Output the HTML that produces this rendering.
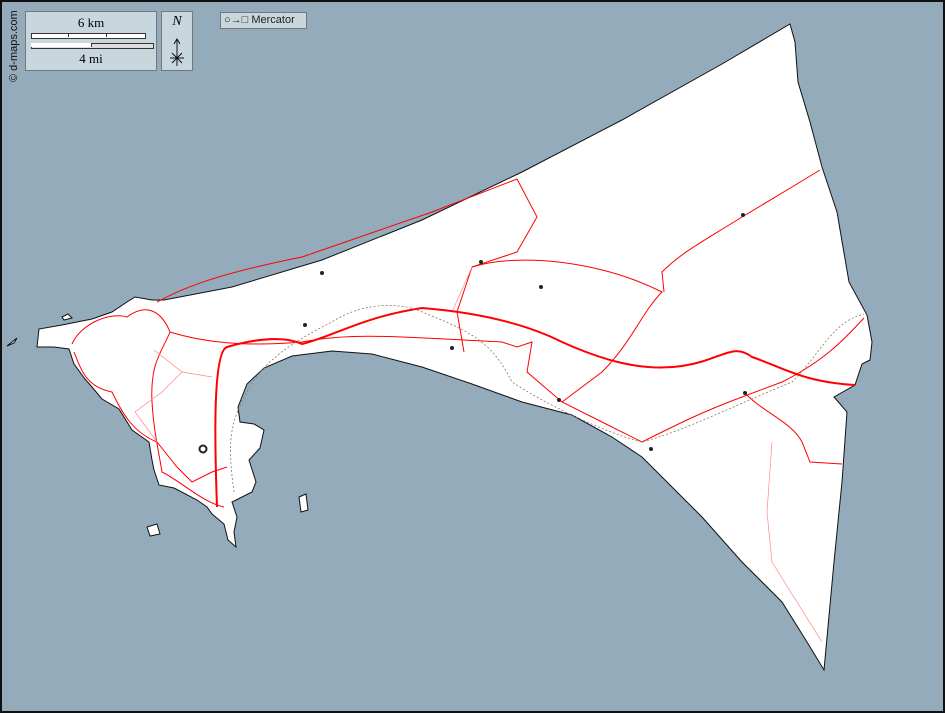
<!DOCTYPE html>
<html><head><style>
html,body{margin:0;padding:0;background:#94abbb;}
.wrap{position:relative;width:945px;height:713px;box-sizing:border-box;border:2px solid #111;overflow:hidden;background:#94abbb;font-family:"Liberation Serif",serif;}
svg{position:absolute;left:0;top:0;}
.box{position:absolute;background:#c8d6de;border:1px solid #777;box-sizing:border-box;}
</style></head><body><div class="wrap">
<svg width="945" height="713" viewBox="0 0 945 713">
<path d="M788,22 L793,40 L796,80 L808,120 L820,165 L835,210 L847,280 L865,313 L870,340 L868,358 L860,362 L853,383 L832,395 L845,410 L840,480 L832,560 L822,668 L805,640 L780,600 L740,560 L700,515 L665,480 L640,455 L610,435 L570,413 L520,400 L470,382 L420,365 L370,352 L330,349 L290,354 L262,366 L245,382 L236,405 L238,420 L252,422 L262,428 L258,446 L247,458 L254,480 L250,490 L230,500 L235,515 L232,530 L234,545 L226,538 L222,522 L210,512 L205,505 L195,498 L172,486 L157,483 L152,468 L150,458 L147,440 L130,428 L117,407 L100,397 L90,385 L83,377 L72,362 L67,347 L52,345 L35,345 L37,327 L60,323 L75,320 L90,317 L110,310 L125,300 L133,295 L150,298 L162,298 L230,285 L320,258 L420,218 L520,170 L620,118 L720,62 Z" fill="#fff" stroke="#111" stroke-width="1"/>
<path d="M145,525 L155,522 L158,532 L148,534 Z M297,495 L304,492 L306,508 L299,510 Z M60,315 L66,312 L70,316 L62,318 Z M5,344 L15,336 L12,341 Z" fill="#fff" stroke="#111" stroke-width="1"/>
<g fill="none" stroke="#f00" stroke-width="1">
<path d="M70,342 C80,320 110,310 125,315 C145,300 160,310 168,330 C200,340 240,345 300,340"/>
<path d="M155,300 C175,290 200,275 300,255 L430,210 L515,177 L535,215 L515,250 L470,265 L455,310 L462,350"/>
<path d="M168,330 C160,350 148,360 150,400 C152,430 155,440 160,470 C180,480 200,500 222,505"/>
<path d="M72,350 C80,370 85,385 110,390 C120,410 130,430 155,440"/>
<path d="M470,265 C520,250 600,260 660,290 C640,310 630,340 600,370 L560,400"/>
<path d="M300,340 C350,330 400,335 500,340 L515,345 L530,340 L525,370 L560,400 L600,420 L640,440 C680,420 700,410 740,395 L780,380 C820,360 840,340 862,316"/>
<path d="M742,390 C760,410 790,420 800,440 L808,460 L840,462"/>
<path d="M662,290 L660,270 C680,250 700,240 740,215 L790,185 L818,168"/>
<path d="M155,440 L175,465 L190,480 L210,470 L225,465"/>
</g>
<g fill="none" stroke="#f88" stroke-width="0.7">
<path d="M152,348 L180,370 L210,375 M180,370 L160,390 L133,410 L155,440"/>
<path d="M770,440 L765,510 L770,560 L820,640"/>
<path d="M470,265 L450,310"/>
</g>
<path d="M215,505 C213,450 210,350 225,345 C260,335 285,335 300,342 C330,335 360,315 420,306 C470,310 520,320 560,340 C600,358 640,370 680,364 C720,358 730,340 750,355 C780,365 800,380 853,383" fill="none" stroke="#f00" stroke-width="2"/>
<path d="M232,490 C225,440 228,420 245,390 C260,360 290,340 330,320 C360,300 400,300 420,310 C470,330 490,340 510,380 C540,400 600,430 640,440 C680,430 740,400 790,380 C820,350 830,320 862,312" fill="none" stroke="#876" stroke-width="0.8" stroke-dasharray="2,2"/>
<g fill="#222"><circle cx="320" cy="271" r="2"/><circle cx="479" cy="260" r="2"/><circle cx="539" cy="285" r="2"/><circle cx="741" cy="213" r="2"/><circle cx="303" cy="323" r="2"/><circle cx="450" cy="346" r="2"/><circle cx="557" cy="398" r="2"/><circle cx="649" cy="447" r="2"/><circle cx="743" cy="391" r="2"/></g>
<circle cx="201" cy="447" r="3.5" fill="none" stroke="#222" stroke-width="2"/>
<text x="15" y="80" transform="rotate(-90 15 80)" font-family="Liberation Sans,sans-serif" font-size="11" fill="#111">© d-maps.com</text>
</svg>
<div class="box" style="left:23px;top:9px;width:132px;height:60px;">
<div style="position:absolute;left:0;width:100%;top:3px;text-align:center;font-size:13px;">6 km</div>
<div style="position:absolute;left:5px;top:21px;width:113px;height:4px;border:1px solid #333;background:#fff;"></div>
<div style="position:absolute;left:42px;top:21px;width:37px;height:4px;border-left:1px solid #333;border-right:1px solid #333;"></div>
<div style="position:absolute;left:5px;top:31px;width:121px;height:4px;border:1px solid #333;background:#ddd;"></div>
<div style="position:absolute;left:5px;top:31px;width:60px;height:4px;border-right:1px solid #333;background:#fff;"></div>
<div style="position:absolute;left:0;width:100%;top:39px;text-align:center;font-size:13px;">4 mi</div>
</div>
<div class="box" style="left:159px;top:9px;width:32px;height:60px;">
<div style="position:absolute;left:0;width:100%;top:2px;text-align:center;font-size:14px;font-style:italic;">N</div>
<svg width="32" height="60" style="left:0;top:0"><path d="M15,28 L15,54 M12,32 L15,27 L18,32 M8,46 L22,46 M10,41 L20,51 M20,41 L10,51" stroke="#111" stroke-width="1" fill="none"/></svg>
</div>
<div class="box" style="left:218px;top:10px;width:87px;height:17px;font-family:'Liberation Sans',sans-serif;font-size:11px;line-height:15px;padding-left:3px;color:#222;">○→□ Mercator</div>
</div></body></html>
